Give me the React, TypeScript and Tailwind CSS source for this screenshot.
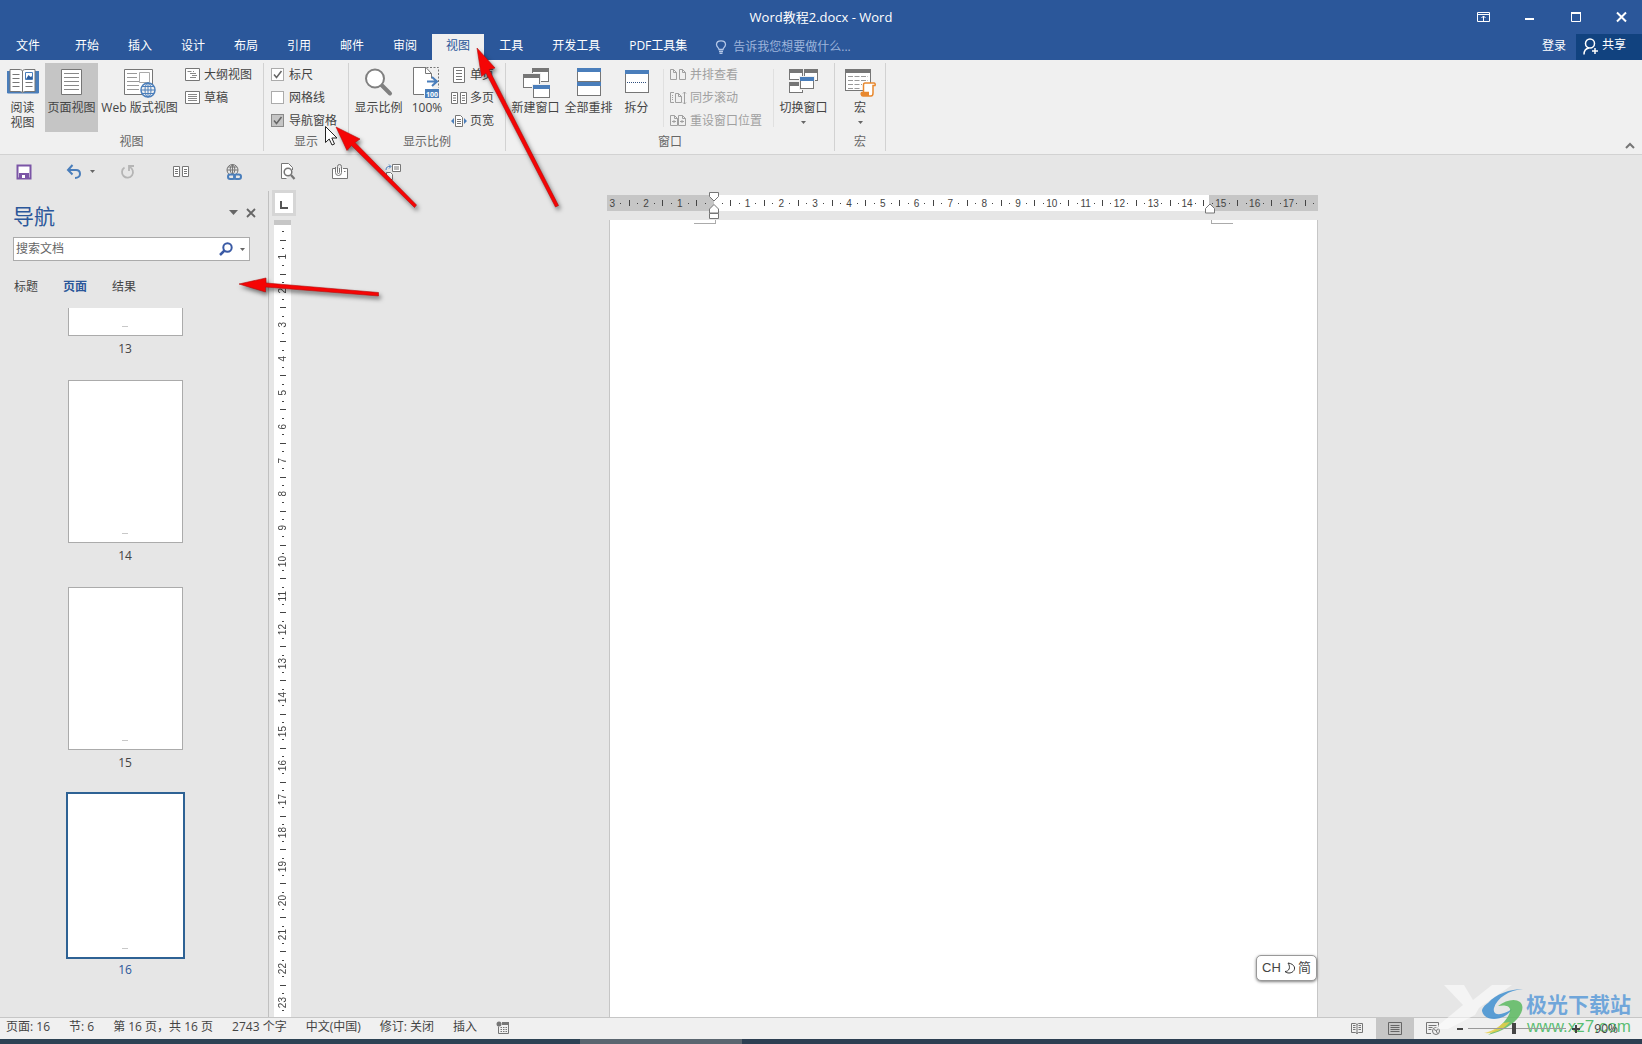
import React from 'react';
import clsx from 'clsx';

const GRAY = '#767676';
const BLUE = '#4a7ebb';

type IconProps = { children: React.ReactNode; w?: number; h?: number; className?: string };

const Icon: React.FC<IconProps> = ({ children, w = 32, h = 32, className }) => (
  <svg width={w} height={h} viewBox={`0 0 ${w} ${h}`} fill="none" stroke={GRAY} className={clsx('shrink-0', className)} aria-hidden="true">
    {children}
  </svg>
);

const Caret: React.FC<{ className?: string }> = ({ className }) => (
  <svg width="5" height="3" viewBox="0 0 5 3" className={clsx('shrink-0', className)} aria-hidden="true">
    <path d="M0 0h5L2.500 3z" fill="#666" />
  </svg>
);

/* ---------- large ribbon icons ---------- */

const ReadIcon = () => (
  <Icon>
    <path d="M.5 5v22h31V5" fill={BLUE} stroke={BLUE} />
    <path d="M3 3.500h9c2 0 3 .5 3.500 1.500.5-1 1.500-1.500 3.500-1.500h9v22h-9c-2 0-3 .5-3.500 1.500-.5-1-1.500-1.500-3.500-1.500H3z" fill="#fff" />
    <path d="M15.500 5v21M5.500 8.500h7M5.500 12.500h7M5.500 16.500h7M5.500 20.500h7M18.500 16.500h7M18.500 20.500h7" />
    <path d="M18.500 6.500h7v7h-7z" stroke={BLUE} />
    <path d="M19 13l2.500-4 2 2 1-1 1 3z" fill="#2f5f9e" stroke="none" />
  </Icon>
);

const PrintLayoutIcon = () => (
  <Icon>
    <path d="M5.500 3.500h20v25h-20z" fill="#fff" />
    <path d="M8 7.500h15M8 11.500h15M8 15.500h15M8 19.500h15M8 23.500h15" stroke="#888" />
  </Icon>
);

const WebLayoutIcon = () => (
  <Icon>
    <path d="M.5 3.500h28v25H.5z" fill="#fff" />
    <path d="M3 7.500h10M3 11.500h10M3 15.500h15M3 19.500h12M3 23.500h12" stroke="#999" />
    <path d="M15.500 6.500h10v10h-10z" fill="#fff" stroke="#aaa" />
    <circle cx="24" cy="24" r="7" fill="#f0f0f0" stroke={BLUE} strokeWidth="1.500" />
    <ellipse cx="24" cy="24" rx="3" ry="7" stroke={BLUE} />
    <path d="M17 24h14M18 20.500h12M18 27.500h12M24 17v14" stroke={BLUE} />
  </Icon>
);

const ZoomIcon = () => (
  <Icon>
    <path d="M18.500 19l8.500 8.500" stroke="#808080" strokeWidth="4" strokeLinecap="round" />
    <circle cx="12" cy="12.500" r="9" fill="#fff" stroke="#808080" strokeWidth="2" />
  </Icon>
);

const HundredIcon = () => (
  <Icon>
    <path d="M2.500 1.500h13l6 6v21h-19z" fill="#fff" stroke="none" />
    <path d="M13 28.500H2.500v-27h12.500l5.500 6v5M14.500 1.500v6h6" />
    <path d="M15.500 1.500h12v20" strokeDasharray="2 1.500" />
    <path d="M16 15.500h9M21 11l5 4.500-5 4.500" stroke={BLUE} strokeWidth="2" />
    <path d="M14 23h14v9H14z" fill={BLUE} stroke="none" />
    <text x="21" y="30.500" textAnchor="middle" fontSize="7" fontWeight="bold" fill="#fff" stroke="none" fontFamily="Open Sans, sans-serif">100</text>
  </Icon>
);

const Win: React.FC<{ x: number; y: number; w: number; h: number; c: string }> = ({ x, y, w, h, c }) => (
  <>
    <rect x={x + 0.5} y={y + 0.5} width={w - 1} height={h - 1} fill="#fff" stroke={GRAY} />
    <rect x={x} y={y} width={w} height="4" fill={c} stroke="none" />
  </>
);

const NewWindowIcon = () => (
  <Icon>
    <Win x={12} y={2} w={17} h={14} c={GRAY} />
    <rect x="2" y="7" width="19" height="14" fill="#f0f0f0" stroke="none" />
    <Win x={3} y={8} w={17} h={14} c={GRAY} />
    <rect x="12" y="18" width="19" height="14" fill="#f0f0f0" stroke="none" />
    <Win x={13} y={19} w={17} h={13} c={BLUE} />
  </Icon>
);

const ArrangeIcon = () => (
  <Icon>
    <Win x={4} y={2} w={24} h={14} c={BLUE} />
    <Win x={4} y={16} w={24} h={14} c={BLUE} />
  </Icon>
);

const SplitIcon = () => (
  <Icon>
    <Win x={4} y={4} w={24} h={23} c={BLUE} />
    <path d="M6 16.500h20" stroke="#2f4f7f" strokeDasharray="1 1" />
  </Icon>
);

const SwitchIcon = () => (
  <Icon>
    <Win x={1} y={3} w={14} h={11} c={GRAY} />
    <Win x={16} y={3} w={14} h={12} c={GRAY} />
    <Win x={1} y={16} w={14} h={11} c={GRAY} />
    <rect x="11" y="10" width="16" height="14" fill="#f0f0f0" stroke="none" />
    <Win x={12} y={11} w={14} h={12} c={BLUE} />
  </Icon>
);

const MacroIcon = () => (
  <Icon>
    <Win x={1} y={3} w={26} h={22} c={GRAY} />
    <path d="M4 10.500h20M4 14.500h20M4 18.500h14M4 22.500h12" stroke="#999" strokeDasharray="5 1.500" />
    <path d="M19.500 26V19c0-1 .5-2 1.500-2h9c1 0 1.500 1 1 2.500h-2V27c0 2-1 3-2 3h-8c-2 0-2-3-1-3.500h7" fill="#fff" stroke="#e8882e" strokeWidth="1.500" />
    <path d="M17 26.500h8v3.500h-7c-1.500-.5-1.500-3-1-3.500z" fill="#e8882e" stroke="none" />
  </Icon>
);

/* ---------- small ribbon icons ---------- */

const OutlineIcon = () => (
  <Icon w={16} h={14}>
    <path d="M.5.5h14v12H.5z" fill="#fff" />
    <path d="M2.500 3.500h4M5 5.500h6M7 7.500h5M5 9.500h6M8 3.500h1" stroke="#888" />
  </Icon>
);
const DraftIcon = () => (
  <Icon w={16} h={14}>
    <path d="M.5.5h14v12H.5z" fill="#fff" />
    <path d="M3 3.500h9M3 5.500h9M3 7.500h9M3 9.500h9" stroke="#888" />
  </Icon>
);
const OnePageIcon = () => (
  <Icon w={16} h={16}>
    <path d="M2.500.5h11v15h-11z" fill="#fff" />
    <path d="M5 3.500h6M5 6.500h6M5 9.500h6M5 12.500h6" />
  </Icon>
);
const MultiPageIcon = () => (
  <Icon w={16} h={14}>
    <path d="M.5 1.500h6v11h-6zM9.500 1.500h6v11h-6z" fill="#fff" />
    <path d="M2 4.500h3M2 7h3M2 9.500h3M11 4.500h3M11 7h3M11 9.500h3" />
  </Icon>
);
const PageWidthIcon = () => (
  <Icon w={16} h={14}>
    <path d="M4.500 1.500h5l2 2v9h-7z" fill="#fff" />
    <path d="M6 5.500h4M6 7.500h4M6 9.500h4" />
    <path d="M3 4v6L0 7zM13 4v6l3-3z" fill={BLUE} stroke="none" />
  </Icon>
);
const SideBySideIcon = () => (
  <Icon w={17} h={14}>
    <path d="M.5 1.500h3l3 3v7h-6zM9.500 1.500h3l3 3v7h-6zM3.500 1.500v3h3M12.500 1.500v3h3" stroke="#a0a0a0" />
  </Icon>
);
const SyncScrollIcon = () => (
  <Icon w={17} h={14}>
    <path d="M4 1.500H.5v10H4M5.500 2.500h3l3 3v6h-6zM8.500 2.500v3h3" stroke="#a0a0a0" />
    <path d="M2.500 4v6" stroke="#a0a0a0" strokeDasharray="1 1" />
    <path d="M14.500 1v12M13 2.500L14.500 1 16 2.500M13 11.500l1.500 1.500 1.500-1.500" stroke="#a0a0a0" />
  </Icon>
);
const ResetIcon = () => (
  <Icon w={17} h={14}>
    <path d="M.5 1.500h4l3 3v7h-7zM8.500 1.500h4l3 3v7h-7zM4.500 1.500v3h3M12.500 1.500v3h3M2 7.500h4M4 6v3M10 7.500h4M12 6v3" stroke="#a0a0a0" />
  </Icon>
);

/* ---------- ribbon building blocks ---------- */

type BigProps = { icon: React.ReactNode; label: string; className: string; active?: boolean; menu?: boolean };

const BigButton: React.FC<BigProps> = ({ icon, label, className, active, menu }) => (
  <button type="button" className={clsx('flex h-[69px] shrink-0 flex-col items-center pt-[3px] leading-[15px]', active && 'bg-[#c5c5c5]', className)}>
    {icon}
    <span className="mt-[2px] whitespace-pre">{label}</span>
    {menu && <Caret className="mt-[6px]" />}
  </button>
);

const SmallButton: React.FC<{ icon: React.ReactNode; label: string; disabled?: boolean }> = ({ icon, label, disabled }) => (
  <button type="button" disabled={disabled} className="flex h-[23px] items-center gap-[3px] whitespace-nowrap disabled:text-[#a0a0a0]">
    {icon}
    {label}
  </button>
);

const Group: React.FC<{ label: string; className: string; children: React.ReactNode }> = ({ label, className, children }) => (
  <section className={clsx('my-[3px] flex shrink-0 flex-col border-r border-[#d2d2d2]', className)}>
    <div className="flex h-[71px]">{children}</div>
    <div className="text-center leading-[18px] text-[#666]">{label}</div>
  </section>
);

const Check: React.FC<{ id: string; label: string; checked?: boolean; hot?: boolean }> = ({ id, label, checked, hot }) => (
  <div className="flex h-[23px] items-center gap-[5px]">
    <span className="relative flex">
      <input
        id={id}
        type="checkbox"
        defaultChecked={checked}
        className={clsx('peer size-[13px] appearance-none border', hot ? 'border-[#8a8a8a] bg-[#c5c5c5]' : 'border-[#ababab] bg-white')}
      />
      <svg width="13" height="13" viewBox="0 0 13 13" className="pointer-events-none absolute inset-0 hidden peer-checked:block" aria-hidden="true">
        <path d="M3 6.500l2.500 3L10.500 3" fill="none" stroke="#666" strokeWidth="1.500" />
      </svg>
    </span>
    <label htmlFor={id} className="whitespace-nowrap">{label}</label>
  </div>
);

/* ---------- header ---------- */

const TitleBar = () => (
  <header className="relative flex h-[34px] items-center justify-end text-white">
    <h1 className="absolute inset-x-0 top-[7px] text-center text-[13px] leading-[20px]">Word教程2.docx - Word</h1>
    <div className="relative flex items-center gap-[33px] pr-[14px]">
      <button type="button" aria-label="功能区显示选项">
        <Icon w={13} h={12}>
          <path d="M.5 1.500h12v9H.5zM.5 3.500h12M6.500 10V5M4.500 7l2-2 2 2" stroke="#fff" />
        </Icon>
      </button>
      <button type="button" aria-label="最小化">
        <Icon w={13} h={12}>
          <path d="M2 8h9" stroke="#fff" strokeWidth="2" />
        </Icon>
      </button>
      <button type="button" aria-label="最大化">
        <Icon w={13} h={12}>
          <path d="M2.500 1.500h9v9h-9z" stroke="#fff" />
          <path d="M2 2h10" stroke="#fff" strokeWidth="2" />
        </Icon>
      </button>
      <button type="button" aria-label="关闭">
        <Icon w={13} h={12}>
          <path d="M2 1.500l9 9M11 1.500l-9 9" stroke="#fff" strokeWidth="2" />
        </Icon>
      </button>
    </div>
  </header>
);

const tabs = ['开始', '插入', '设计', '布局', '引用', '邮件', '审阅', '视图', '工具', '开发工具', 'PDF工具集'];

const TabBar = () => (
  <nav className="flex h-[26px] items-center text-white">
    <button type="button" className="mr-[5px] w-14 shrink-0 pb-[2px]">文件</button>
    <div className="flex h-full shrink-0 gap-px">
      {tabs.map((tab) => (
        <button
          key={tab}
          type="button"
          className={clsx('px-[14px] pb-[2px] whitespace-nowrap', tab === '视图' && 'bg-[#f0f0f0] text-[#2b579a]')}
        >
          {tab}
        </button>
      ))}
    </div>
    <div className="ml-[14px] flex flex-1 items-center gap-[6px]">
      <Icon w={12} h={14}>
        <path d="M4 9.500C4 8 1.500 7 1.500 4.500 1.500 2 3.500.8 6 .8s4.500 1.200 4.500 3.700C10.500 7 8 8 8 9.500zM4 11.500h4M4.500 13.300h3" stroke="#b4c7e7" strokeWidth="1.300" />
      </Icon>
      <input
        aria-label="告诉我您想要做什么"
        placeholder="告诉我您想要做什么..."
        className="w-40 bg-transparent outline-none placeholder:text-[#9db4db]"
      />
    </div>
    <button type="button" className="mr-[10px] pb-[2px]">登录</button>
    <button type="button" className="flex h-full w-[66px] items-center gap-1 bg-[#11427f] pb-[2px] pl-[7px]">
      <Icon w={15} h={17}>
        <circle cx="7" cy="5.500" r="4.500" stroke="#fff" strokeWidth="1.500" />
        <path d="M1 16.500c0-4 2-6 5-6.500M12 10v6M9 13h6" stroke="#fff" strokeWidth="1.500" />
      </Icon>
      <span className="pb-[2px]">共享</span>
    </button>
  </nav>
);

const Ribbon = () => (
  <div className="relative flex h-[95px] border-b border-[#d2d2d2] bg-[#f0f0f0]">
    <Group label="视图" className="w-[264px]">
      <BigButton icon={<ReadIcon />} label={'阅读\n视图'} className="w-[45px]" />
      <BigButton icon={<PrintLayoutIcon />} label="页面视图" className="w-[53px]" active />
      <BigButton icon={<WebLayoutIcon />} label="Web 版式视图" className="w-[83px]" />
      <div className="ml-1">
        <SmallButton icon={<OutlineIcon />} label="大纲视图" />
        <SmallButton icon={<DraftIcon />} label="草稿" />
      </div>
    </Group>
    <Group label="显示" className="w-[85px]">
      <div className="ml-[7px]">
        <Check id="ruler" label="标尺" checked />
        <Check id="grid" label="网格线" />
        <Check id="navpane" label="导航窗格" checked hot />
      </div>
    </Group>
    <Group label="显示比例" className="w-[157px]">
      <BigButton icon={<ZoomIcon />} label="显示比例" className="ml-[3px] w-[53px]" />
      <BigButton icon={<HundredIcon />} label="100%" className="w-[44px]" />
      <div className="ml-[2px]">
        <SmallButton icon={<OnePageIcon />} label="单页" />
        <SmallButton icon={<MultiPageIcon />} label="多页" />
        <SmallButton icon={<PageWidthIcon />} label="页宽" />
      </div>
    </Group>
    <Group label="窗口" className="w-[329px]">
      <BigButton icon={<NewWindowIcon />} label="新建窗口" className="ml-[3px] w-[53px]" />
      <BigButton icon={<ArrangeIcon />} label="全部重排" className="w-[53px]" />
      <BigButton icon={<SplitIcon />} label="拆分" className="w-[43px]" />
      <div className="my-[6px] ml-[5px] border-l border-[#e0e0e0]" />
      <div className="ml-[6px] w-[103px]">
        <SmallButton icon={<SideBySideIcon />} label="并排查看" disabled />
        <SmallButton icon={<SyncScrollIcon />} label="同步滚动" disabled />
        <SmallButton icon={<ResetIcon />} label="重设窗口位置" disabled />
      </div>
      <div className="my-[6px] border-l border-[#e0e0e0]" />
      <BigButton icon={<SwitchIcon />} label="切换窗口" className="ml-[3px] w-[53px]" menu />
    </Group>
    <Group label="宏" className="w-[51px]">
      <BigButton icon={<MacroIcon />} label="宏" className="w-[50px]" menu />
    </Group>
    <button type="button" aria-label="折叠功能区" className="absolute right-[7px] bottom-[5px]">
      <Icon w={10} h={7}>
        <path d="M1 6l4-4 4 4" strokeWidth="2" />
      </Icon>
    </button>
  </div>
);

const QuickBar = () => (
  <div className="flex h-[33px] shrink-0 items-center pl-4">
    <button type="button" aria-label="保存" className="w-[50px]">
      <Icon w={16} h={16}>
        <path d="M1.500 1.500h13v13h-13z" stroke="#7b55a6" strokeWidth="2" fill="#fff" />
        <path d="M3 9h10v5H3z" fill="#7b55a6" stroke="none" />
        <path d="M6 11h3v3H6z" fill="#fff" stroke="none" />
      </Icon>
    </button>
    <button type="button" aria-label="撤消" className="flex w-[54px] items-center gap-2">
      <Icon w={16} h={16}>
        <path d="M2 6h8c3 0 4 2 4 4s-2 4-5 4" stroke={BLUE} strokeWidth="2" />
        <path d="M6.500 1L2 6l4.500 4.500" stroke={BLUE} strokeWidth="2" />
      </Icon>
      <Caret />
    </button>
    <button type="button" aria-label="重复" className="w-[53px]">
      <Icon w={16} h={16}>
        <path d="M9.500 3a5.500 5.500 0 1 1-5 .5M9 7V2h5" stroke="#b5b5b5" strokeWidth="1.800" />
      </Icon>
    </button>
    <button type="button" aria-label="多页" className="w-[53px]">
      <Icon w={16} h={14}>
        <path d="M.5 1.500h6v10h-6zM9.500 1.500h6v10h-6z" fill="#fff" />
        <path d="M2 4.500h3M2 6.500h3M2 8.500h3M11 4.500h3M11 6.500h3M11 8.500h3" />
      </Icon>
    </button>
    <button type="button" aria-label="超链接" className="w-[54px]">
      <Icon w={17} h={18}>
        <circle cx="6.500" cy="7" r="5.500" />
        <path d="M6.500 1.500v10M1 7h11M2 4h9M6.500 1.500c-3 2-3 8 0 10M6.500 1.500c3 2 3 8 0 10" />
        <rect x="2" y="11.500" width="7" height="4.500" rx="2.200" fill="#e6e6e6" stroke={BLUE} strokeWidth="2" />
        <rect x="8" y="11.500" width="7" height="4.500" rx="2.200" stroke={BLUE} strokeWidth="2" />
      </Icon>
    </button>
    <button type="button" aria-label="打印预览" className="w-[51px]">
      <Icon w={16} h={17}>
        <path d="M12.500 7V4.500l-4-4h-7v15h5" fill="#fff" />
        <circle cx="8" cy="9" r="3.800" strokeWidth="1.500" fill="#fff" />
        <path d="M11 12l3.500 4" strokeWidth="2.200" />
      </Icon>
    </button>
    <button type="button" aria-label="附件" className="w-[53px]">
      <Icon w={18} h={16}>
        <path d="M4 4.500H1.500v10h15v-10H12" fill="#fff" />
        <path d="M4.500 3v5.500a3 3 0 0 0 6 0V2.500a2 2 0 0 0-4 0v6a1 1 0 0 0 2 0V4M13 7.500h1.500" />
      </Icon>
    </button>
    <button type="button" aria-label="切换">
      <Icon w={18} h={16}>
        <path d="M8.500.5h8v7h-8zM10 3h5M10 5h5" fill="#fff" />
        <path d="M2.500 8.500h4l2 2v5h-6z" fill="#fff" />
        <path d="M2 6c0-3 2-4 4.500-3.500M5 .5l2 2-2 2" stroke={BLUE} />
      </Icon>
    </button>
  </div>
);

/* ---------- navigation pane ---------- */

const pages = [14, 15, 16];

const Thumb: React.FC<{ n: number; selected?: boolean; cut?: boolean }> = ({ n, selected, cut }) => (
  <button type="button" className="mb-[21px] flex shrink-0 flex-col items-center gap-[3px]">
    <span
      className={clsx(
        'flex w-[115px] items-end justify-center bg-white pb-2',
        cut ? 'h-[28px] border-x border-b border-[#ababab]' : 'h-[163px]',
        selected ? 'ring-2 ring-[#2e6294]' : !cut && 'border border-[#ababab]',
      )}
    >
      <span className="h-px w-[6px] bg-[#c8c8c8]" />
    </span>
    <span className={clsx('leading-[20px]', selected && 'text-[#2b579a]')}>{n}</span>
  </button>
);

const NavPane = () => (
  <aside className="mt-[3px] flex w-[269px] shrink-0 flex-col border-r border-[#c0c0c0]">
    <div className="flex h-[46px] items-center pt-[5px] pr-3 pl-[13px]">
      <h2 className="flex-1 text-[21px] text-[#2b579a]">导航</h2>
      <button type="button" aria-label="任务窗格选项" className="mr-2 pb-2">
        <Icon w={9} h={5}>
          <path d="M0 0h9L4.500 5z" fill="#666" stroke="none" />
        </Icon>
      </button>
      <button type="button" aria-label="关闭窗格" className="pb-2">
        <Icon w={10} h={10}>
          <path d="M1 1l8 8M9 1L1 9" stroke="#666" strokeWidth="1.800" />
        </Icon>
      </button>
    </div>
    <div className="mr-[18px] ml-[13px] flex h-[24px] items-center border border-[#ababab] bg-white pr-1 pl-[2px]">
      <input aria-label="搜索文档" placeholder="搜索文档" className="min-w-0 flex-1 outline-none placeholder:text-[#666]" />
      <button type="button" aria-label="搜索" className="mr-[7px]">
        <Icon w={14} h={14}>
          <circle cx="8.500" cy="5.500" r="4.200" stroke="#3a5aa5" strokeWidth="2" />
          <path d="M5.500 8.500L1 13" stroke="#3a5aa5" strokeWidth="2.500" />
        </Icon>
      </button>
      <Caret />
    </div>
    <div className="mt-[17px] mb-3 flex h-[18px] items-center gap-[25px] pl-[14px]">
      <button type="button">标题</button>
      <button type="button" className="font-bold text-[#2b579a]">页面</button>
      <button type="button">结果</button>
    </div>
    <div className="flex min-h-0 flex-1 flex-col items-center overflow-hidden pr-[18px]">
      <Thumb n={13} cut />
      {pages.map((n) => (
        <Thumb key={n} n={n} selected={n === 16} />
      ))}
    </div>
  </aside>
);

/* ---------- rulers ---------- */

const horizontalMarks = ['3', '2', '1', '', ...Array.from({ length: 17 }, (_, i) => String(i + 1))];
const verticalMarks = ['', ...Array.from({ length: 23 }, (_, i) => String(i + 1))];

const HorizontalRuler = () => (
  <div className="relative flex h-4 w-full bg-[linear-gradient(90deg,#c6c6c6_107px,#fff_107px,#fff_602px,#c6c6c6_602px)] pl-px font-['Liberation_Sans'] text-[10px]">
    {horizontalMarks.map((m, i) => (
      <div key={i} className="grid flex-1 grid-cols-4 items-center justify-items-center">
        <span>{m}</span>
        <span className="size-px bg-[#444]" />
        <span className="h-[6px] w-px bg-[#444]" />
        <span className="size-px bg-[#444]" />
      </div>
    ))}
    <Icon w={12} h={28} className="absolute -top-[3px] left-[101px]">
      <path d="M1.500.5h9v4l-4.500 4.500L1.500 4.500zM6 12.500l4.500 4.500v4h-9v-4zM1.500 21.500h9v5h-9z" fill="#fff" />
    </Icon>
    <Icon w={12} h={12} className="absolute top-[8px] left-[597px]">
      <path d="M6 1l4.500 4.500V10h-9V5.500z" fill="#fff" />
    </Icon>
  </div>
);

const VerticalRuler = () => (
  <div className="mt-1 ml-[2px] flex min-h-0 w-[17px] flex-1 flex-col overflow-hidden bg-white font-['Liberation_Sans'] text-[10px]">
    <div className="h-[5px] shrink-0 bg-[#c6c6c6]" />
    <div className="-mt-[6px] flex h-[813px] shrink-0 flex-col">
      {verticalMarks.map((m, i) => (
        <div key={i} className="grid min-h-0 flex-1 basis-0 grid-rows-[repeat(4,minmax(0,1fr))] items-center justify-items-center">
          <span className="rotate-180 leading-none [writing-mode:vertical-rl]">{m}</span>
          <span className="h-px w-[2px] bg-[#444]" />
          <span className="h-px w-[6px] bg-[#444]" />
          <span className="h-px w-[2px] bg-[#444]" />
        </div>
      ))}
    </div>
  </div>
);

/* ---------- document ---------- */

const DocumentArea = () => (
  <main className="flex min-w-0 flex-1">
    <div className="ml-[3px] flex w-6 shrink-0 flex-col pt-[2px]">
      <button type="button" aria-label="左对齐式制表符" className="flex h-[26px] items-center justify-center border-[3px] border-[#d6d6d6] bg-white">
        <Icon w={8} h={8} className="mt-1">
          <path d="M1 0v7h7" stroke="#555" strokeWidth="2" />
        </Icon>
      </button>
      <VerticalRuler />
    </div>
    <div className="flex flex-1 justify-center pr-[13px]">
      <div className="flex w-[711px] shrink-0 flex-col gap-[9px] pt-[7px]">
        <HorizontalRuler />
        <article className="relative ml-[2px] flex-1 border-x border-[#c6c6c6] bg-white">
          <span className="absolute top-0 left-[84px] h-1 w-[22px] border-r border-b border-[#ababab]" />
          <span className="absolute top-0 right-[84px] h-1 w-[22px] border-b border-l border-[#ababab]" />
          <div className="absolute right-0 bottom-9 flex h-[26px] w-[61px] items-center justify-center gap-[3px] rounded-[5px] border border-[#999] bg-white font-['Liberation_Sans','Noto_Sans_CJK_SC',sans-serif] text-[13px] shadow-[0_1px_3px_rgba(0,0,0,0.5)]">
            CH
            <Icon w={11} h={12}>
              <path d="M4 1c7 1 8 6 5 8.500C7 11.500 3 11.500 1 9.500c4 0 6-4 3-8.500z" stroke="#333" />
            </Icon>
            简
          </div>
        </article>
      </div>
    </div>
  </main>
);

const StatusBar = () => (
  <footer className="flex h-[22px] shrink-0 items-center border-t border-[#c6c6c6] bg-[#f0f0f0] pl-[6px] whitespace-nowrap text-[#444]">
    <div className="flex flex-1 items-center gap-[19px] pb-[3px]">
      <span>页面: 16</span>
      <span>节: 6</span>
      <span>第 16 页，共 16 页</span>
      <span>2743 个字</span>
      <span>中文(中国)</span>
      <span>修订: 关闭</span>
      <span>插入</span>
      <Icon w={13} h={13}>
        <path d="M2.500 5.500v7h10v-9H7" />
        <circle cx="3" cy="3" r="2.500" fill={GRAY} stroke="none" />
        <path d="M6 1h7v3H6z" fill={GRAY} stroke="none" />
        <path d="M4.500 6.500h7M4.500 8.500h7M4.500 10.500h7" strokeDasharray="1.500 1" />
      </Icon>
    </div>
    <button type="button" aria-label="阅读视图" className="flex w-[38px] justify-center">
      <Icon w={14} h={13}>
        <path d="M1.500 1.500h4l1.500 1 1.500-1h4v9h-4l-1.500 1-1.500-1h-4zM7 2.500V12M3 3.500h2.500M3 5.500h2.500M3 7.500h2.500M8.500 3.500H11M8.500 5.500H11M8.500 7.500H11" />
      </Icon>
    </button>
    <button type="button" aria-label="页面视图" className="flex h-full w-[38px] items-center justify-center bg-[#c6c6c6]">
      <Icon w={14} h={13}>
        <path d="M.5.5h13v12H.5zM2.500 3.500h9M2.500 5.500h9M2.500 7.500h9M2.500 9.500h9" stroke="#666" />
      </Icon>
    </button>
    <button type="button" aria-label="Web 版式视图" className="flex w-[38px] justify-center">
      <Icon w={14} h={13}>
        <path d="M12.500 5V.5H.5v11H5M2.500 3.500h8M2.500 5.500h4M2.500 7.500h3" />
        <circle cx="10" cy="9" r="3.500" />
        <path d="M8 7.500l2 1 2-1M10 8.500l1.500 3" />
      </Icon>
    </button>
    {/* the zoom controls stay legible above the site mark */}
    <div className="relative z-10 ml-[2px] flex items-center">
      <button type="button" aria-label="缩小" className="flex w-3 justify-center">
        <Icon w={6} h={10}>
          <path d="M0 5h6" stroke="#444" strokeWidth="2" />
        </Icon>
      </button>
      <input
        type="range"
        aria-label="显示比例"
        min={0}
        max={100}
        defaultValue={46}
        className="mx-[2px] h-[11px] w-[98px] appearance-none bg-[linear-gradient(#999,#999)] bg-[length:100%_1px] bg-center bg-no-repeat [&::-webkit-slider-thumb]:h-[11px] [&::-webkit-slider-thumb]:w-1 [&::-webkit-slider-thumb]:appearance-none [&::-webkit-slider-thumb]:bg-[#444]"
      />
      <button type="button" aria-label="放大" className="flex w-4 justify-center">
        <Icon w={8} h={10}>
          <path d="M0 5h8M4 1v8" stroke="#444" strokeWidth="2" />
        </Icon>
      </button>
      <span className="mr-6 ml-[10px]">90%</span>
    </div>
  </footer>
);

/* ---------- annotations drawn over the window ---------- */

const Annotations = () => (
  <svg width="600" height="320" viewBox="0 0 600 320" className="pointer-events-none absolute top-0 left-0" aria-hidden="true">
    <path d="M325.500 126.500v16l3.700-3.500 2.800 6 2.500-1-2.700-6h5.200z" fill="#fff" stroke="#222" />
    <g fill="#f50505" stroke="#b40c0c" strokeWidth=".6" className="drop-shadow-[2px_3px_2px_rgba(0,0,0,0.5)]">
      <path d="M336 127l24 12-5 3.500 61.500 62.500-2 2.500-63-62-4.500 5z" />
      <path d="M477 48l18 20-6 1.500 69.500 136-3 1.500L486 73l-4.500 3.500z" />
      <path d="M239 284l27-6v5l112.500 9.500v3.500L265.500 287v5z" />
    </g>
  </svg>
);

const Watermark = () => (
  <div className="pointer-events-none absolute right-[11px] bottom-[7px] flex items-end">
    <svg width="116" height="58" viewBox="0 0 116 58" className="-mr-6 shrink-0" aria-hidden="true">
      <path d="M10 6h20l9 15L58 6h20L45 29l-4 7L14 50H0l29-24z" fill="#fff" opacity=".55" />
      <path d="M54 24c8-9 22-14 35-14-14 1-26 9-29 19-2 8 8 8 18 1-8 13-28 13-30 2 0-3 3-6 6-8z" fill="#3f8fd0" opacity=".85" />
      <path d="M64 27c8-6 17-8 22-4 8 7-4 26-32 33 13-8 23-19 22-26-1-4-7-4-12-3z" fill="#5bb85f" opacity=".85" />
      <path d="M50 54c6-1 14-5 19-10l7-1c-6 7-15 12-26 11z" fill="#e6cf4a" opacity=".85" />
    </svg>
    <div className="relative flex flex-col items-end leading-[20px]">
      <span className="text-[21px] leading-[26px] font-bold text-[#5b9bd8]/85">极光下载站</span>
      <span className="font-['Liberation_Sans'] text-[17px] text-[#3fb55c]/85">www.xz7.com</span>
    </div>
  </div>
);

const App: React.FC = () => (
  <div className="relative flex h-screen flex-col overflow-hidden bg-[#e6e6e6] font-['Open_Sans','Noto_Sans_CJK_SC',sans-serif] text-[12px] text-[#444]">
    <div className="shrink-0 bg-[#2b579a]">
      <TitleBar />
      <TabBar />
      <Ribbon />
    </div>
    <QuickBar />
    <div className="flex min-h-0 flex-1">
      <NavPane />
      <DocumentArea />
    </div>
    <StatusBar />
    <div className="h-[5px] shrink-0 bg-[linear-gradient(90deg,#2d4254_0_580px,#5b6670_580px_742px,#2d3f52_742px)]" />
    <Annotations />
    <Watermark />
  </div>
);

export default App;
